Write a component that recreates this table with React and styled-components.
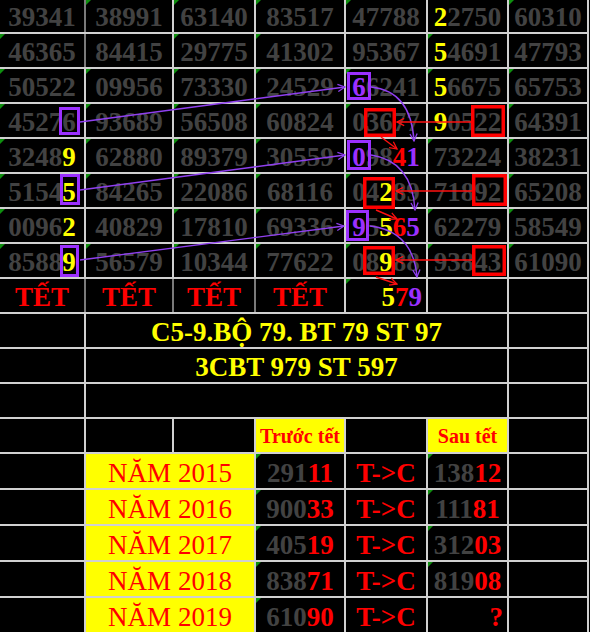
import React from 'react';
import styled, { createGlobalStyle, css } from 'styled-components';

const GlobalStyle = createGlobalStyle`
  html, body {
    margin: 0;
    padding: 0;
    background: #000000;
  }
  body {
    width: 590px;
    height: 632px;
    overflow: hidden;
    font-family: 'Liberation Serif', 'Times New Roman', serif;
  }
`;

const TONES = {
    y: '#ffff00',
    r: '#ff0000',
    p: '#9b30ff',
};

const Sheet = styled.div`
    position: relative;
    box-sizing: border-box;
    width: 589px;
    display: grid;
    grid-template-columns: 84px 86px 80px 88px 80px 79px 78px;
    grid-template-rows: 32px repeat(12, 33px) repeat(5, 34px);
    gap: 2px;
    background: #d0d0d0;
    border-right: 2px solid #d0d0d0;
`;

const Cell = styled.div`
    position: relative;
    display: flex;
    align-items: flex-end;
    justify-content: ${props => (props.$right ? 'flex-end' : 'center')};
    padding-right: ${props => (props.$right ? '4px' : '0')};
    background: ${props => props.$bg || '#000000'};
    font-family: 'Liberation Serif', 'Times New Roman', serif;
    font-size: 27px;
    line-height: 29px;
    font-weight: bold;
    color: #424242;
    white-space: nowrap;
    ${props => props.$darkLeft && css`
        box-shadow: -2px 0 0 #7a7a7a;
    `}
    ${props => props.$mark && css`
        &::before {
            content: '';
            position: absolute;
            top: 0;
            left: 0;
            border-style: solid;
            border-width: 5px 5px 0 0;
            border-color: #0f8f0f transparent transparent transparent;
        }
    `}
`;

const TetCell = styled(Cell)`
    color: #ff0000;
`;

const BannerCell = styled(Cell)`
    grid-column: span 5;
    color: #ffff00;
`;

const HeadCell = styled(Cell)`
    align-items: center;
    padding-top: 2px;
    background: #ffff00;
    color: #ff0000;
    font-size: 20px;
    line-height: 23px;
`;

const YearCell = styled(Cell)`
    grid-column: span 2;
    background: #ffff00;
    color: #ff0000;
    font-weight: normal;
`;

const ArrowCell = styled(Cell)`
    color: #ff0000;
`;

const Seg = styled.span`
    color: ${props => TONES[props.$c] || 'inherit'};
`;

const Overlay = styled.svg`
    position: absolute;
    top: 0;
    left: 0;
    pointer-events: none;
`;

// each cell: plain string, or list of parts where [text, tone] is coloured
const grid = [
    ['39341', '38991', '63140', '83517', '47788', [['2', 'y'], '2750'], '60310'],
    ['46365', '84415', '29775', '41302', '95367', [['5', 'y'], '4691'], '47793'],
    ['50522', '09956', '73330', '24529', [['6', 'p'], '6241'], [['5', 'y'], '6675'], '65753'],
    ['45276', '93689', '56508', '60824', '03677', [['9', 'y'], '0522'], '64391'],
    [['3248', ['9', 'y']], '62880', '89379', '30559', [['0', 'p'], '98', ['4', 'r'], ['1', 'p']], '73224', '38231'],
    [['5154', ['5', 'y']], '84265', '22086', '68116', ['04', ['2', 'y'], '89'], '71892', '65208'],
    [['0096', ['2', 'y']], '40829', '17810', '69336', [['9', 'p'], '5', ['5', 'y'], ['6', 'r'], ['5', 'p']], '62279', '58549'],
    [['8588', ['9', 'y']], '56579', '10344', '77622', ['08', ['9', 'y'], '88'], '93843', '61090'],
];

const noMark = ['0-0', '1-1', '1-4', '1-6', '0-5', '3-5', '4-4', '5-5', '6-1', '6-4'];

const years = [
    ['2015', '291', '11', '138', '12'],
    ['2016', '900', '33', '111', '81'],
    ['2017', '405', '19', '312', '03'],
    ['2018', '838', '71', '819', '08'],
    ['2019', '610', '90', null, null],
];

function renderParts(value) {
    if (typeof value === 'string') return value;
    return value.map((part, i) =>
        typeof part === 'string'
            ? <React.Fragment key={i}>{part}</React.Fragment>
            : <Seg key={i} $c={part[1]}>{part[0]}</Seg>
    );
}

const purpleBoxes = [
    [347, 72, 371, 100],
    [59, 107, 80, 135],
    [347, 140, 371, 170],
    [60, 174, 80, 205],
    [346, 210, 369, 241],
    [60, 245, 79, 277],
];

const redBoxes = [
    [364, 108, 396, 137],
    [471, 105, 505, 137],
    [363, 177, 395, 209],
    [472, 174, 507, 206],
    [363, 246, 395, 275],
    [472, 245, 506, 276],
];

const purpleLines = [
    'M80,122 L345,87',
    'M80,190 L345,155',
    'M80,260 L344,226',
    'M371,87 Q411,91 414,141',
    'M371,155 Q412,161 415,210',
    'M370,226 Q413,231 417,277',
];

const redLines = [
    'M471,122 L397,122',
    'M472,191 L396,191',
    'M472,260 L396,260',
    'M381,137 L397,149',
    'M376,210 L397,219',
    'M376,277 L397,284',
];

function Box({ coords, stroke, width }) {
    const [x1, y1, x2, y2] = coords;
    const h = width / 2;
    return (
        <rect
            x={x1 + h}
            y={y1 + h}
            width={x2 - x1 - width}
            height={y2 - y1 - width}
            fill="none"
            stroke={stroke}
            strokeWidth={width}
        />
    );
}

function Annotations() {
    return (
        <Overlay width="589" height="320" viewBox="0 0 589 320">
            <defs>
                <marker id="headP" viewBox="0 0 10 10" refX="9" refY="5" markerWidth="9" markerHeight="9" markerUnits="userSpaceOnUse" orient="auto">
                    <path d="M1,1 L9,5 L1,9" fill="none" stroke="#9040f0" strokeWidth="1.4" />
                </marker>
                <marker id="headR" viewBox="0 0 10 10" refX="9" refY="5" markerWidth="9" markerHeight="9" markerUnits="userSpaceOnUse" orient="auto">
                    <path d="M1,1 L9,5 L1,9" fill="none" stroke="#ff1010" strokeWidth="1.4" />
                </marker>
            </defs>
            {purpleLines.map((d, i) => (
                <path key={`p${i}`} d={d} fill="none" stroke="#9040f0" strokeWidth="1.4" markerEnd="url(#headP)" />
            ))}
            {redLines.map((d, i) => (
                <path key={`r${i}`} d={d} fill="none" stroke="#ff1010" strokeWidth="1.4" markerEnd="url(#headR)" />
            ))}
            {purpleBoxes.map((c, i) => (
                <Box key={`pb${i}`} coords={c} stroke="#9b30ff" width={3} />
            ))}
            {redBoxes.map((c, i) => (
                <Box key={`rb${i}`} coords={c} stroke="#ff0000" width={3.5} />
            ))}
        </Overlay>
    );
}

function App() {
    return (
        <>
            <GlobalStyle />
            <Sheet>
                {grid.map((row, r) =>
                    row.map((value, c) => (
                        <Cell
                            key={`${r}-${c}`}
                            $mark={!noMark.includes(`${r}-${c}`)}
                            $darkLeft={c === 1 && r < 2}
                        >
                            {renderParts(value)}
                        </Cell>
                    ))
                )}

                {[0, 1, 2, 3].map(c => (
                    <TetCell key={`tet${c}`} $darkLeft={c > 0}>TẾT</TetCell>
                ))}
                <Cell $right $mark>
                    <Seg $c="y">5</Seg>
                    <Seg $c="r">7</Seg>
                    <Seg $c="p">9</Seg>
                </Cell>
                <Cell />
                <Cell />

                <Cell />
                <BannerCell>C5-9.BỘ 79. BT 79 ST 97</BannerCell>
                <Cell />

                <Cell />
                <BannerCell>3CBT 979 ST 597</BannerCell>
                <Cell />

                <Cell />
                <BannerCell />
                <Cell />

                <Cell />
                <Cell />
                <Cell />
                <HeadCell>Trước tết</HeadCell>
                <Cell />
                <HeadCell>Sau tết</HeadCell>
                <Cell />

                {years.map(([year, b1, b2, a1, a2]) => (
                    <React.Fragment key={year}>
                        <Cell />
                        <YearCell>NĂM {year}</YearCell>
                        <Cell $mark>
                            {b1}<Seg $c="r">{b2}</Seg>
                        </Cell>
                        <ArrowCell>T-&gt;C</ArrowCell>
                        {a1 ? (
                            <Cell $mark>
                                {a1}<Seg $c="r">{a2}</Seg>
                            </Cell>
                        ) : (
                            <Cell $right>
                                <Seg $c="r">?</Seg>
                            </Cell>
                        )}
                        <Cell />
                    </React.Fragment>
                ))}

                <Annotations />
            </Sheet>
        </>
    );
}

export default App;
